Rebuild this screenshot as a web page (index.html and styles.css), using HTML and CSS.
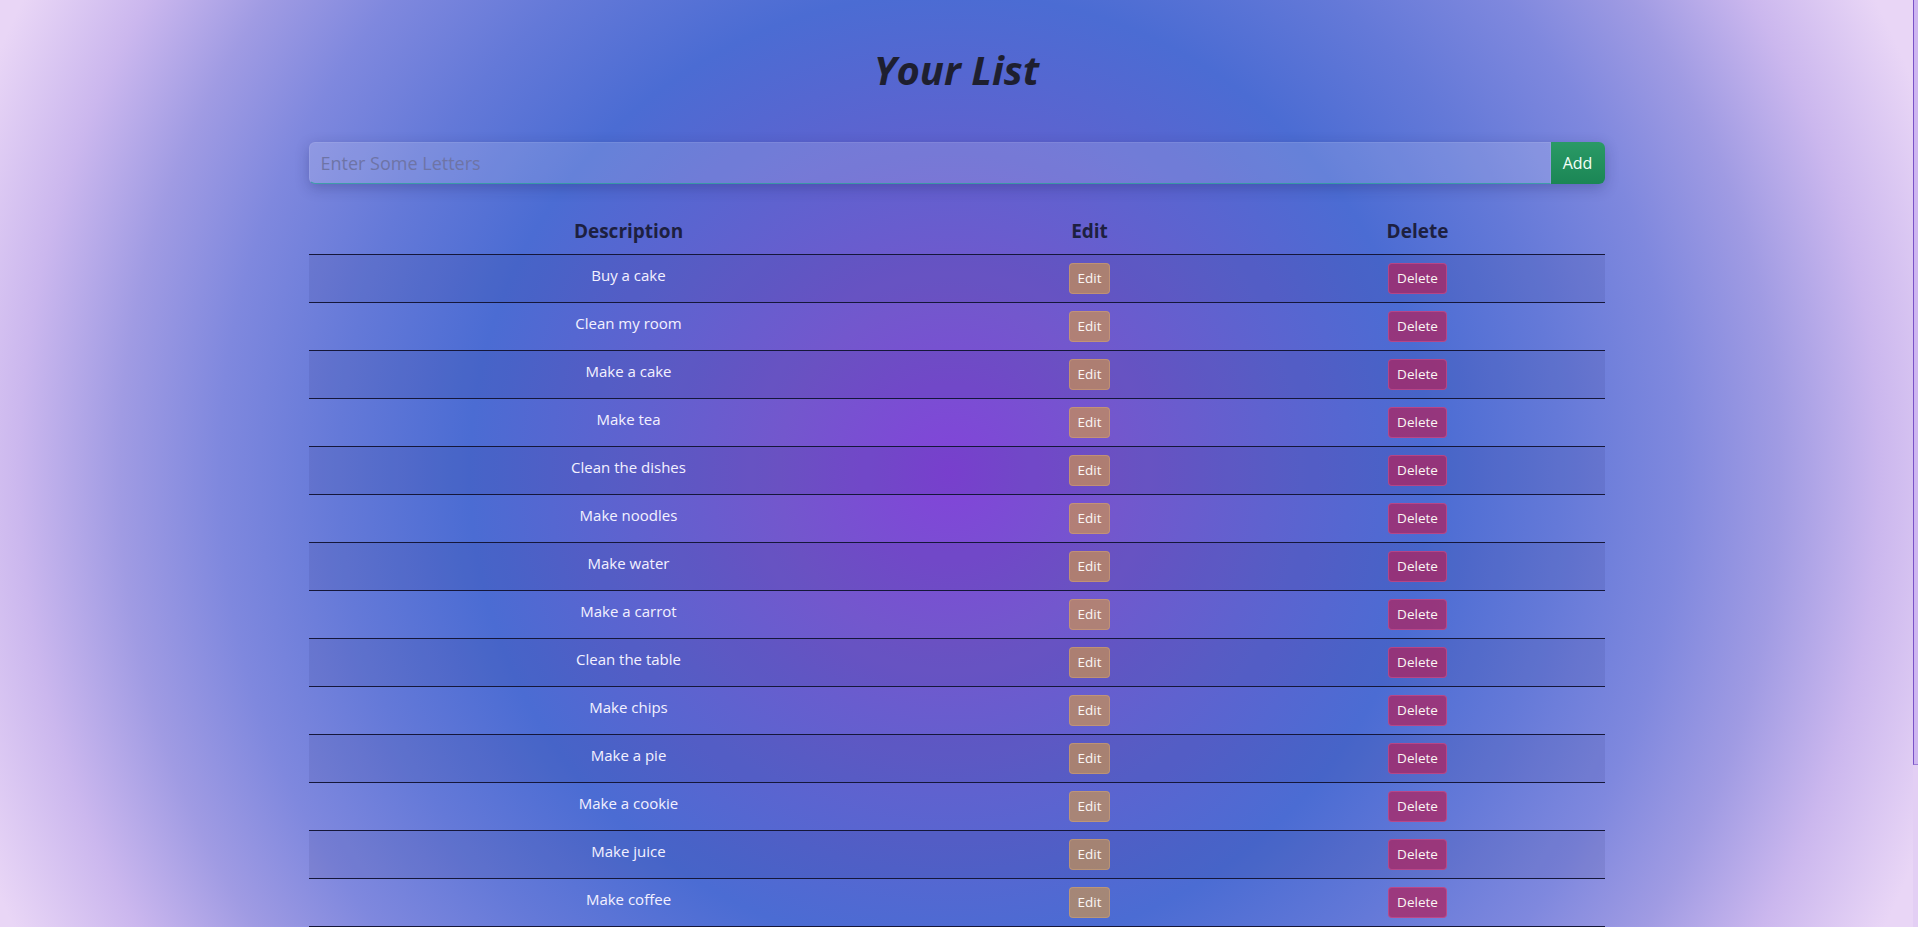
FILE: index.html
```html
<!DOCTYPE html>
<html lang="en">
<head>
<meta charset="utf-8">
<title>Your List</title>
<link rel="stylesheet" href="styles.css">
</head>
<body>
<main class="container">
  <h1 class="title">Your List</h1>
  <form class="add-form">
    <input class="add-input" type="text" placeholder="Enter Some Letters">
    <button class="add-btn" type="button">Add</button>
  </form>
  <table class="todo-table">
    <colgroup>
      <col class="col-desc">
      <col class="col-edit">
      <col class="col-del">
    </colgroup>
    <thead>
      <tr><th>Description</th><th>Edit</th><th>Delete</th></tr>
    </thead>
    <tbody>
      <tr><td>Buy a cake</td><td><button class="btn btn-edit">Edit</button></td><td><button class="btn btn-del">Delete</button></td></tr>
      <tr><td>Clean my room</td><td><button class="btn btn-edit">Edit</button></td><td><button class="btn btn-del">Delete</button></td></tr>
      <tr><td>Make a cake</td><td><button class="btn btn-edit">Edit</button></td><td><button class="btn btn-del">Delete</button></td></tr>
      <tr><td>Make tea</td><td><button class="btn btn-edit">Edit</button></td><td><button class="btn btn-del">Delete</button></td></tr>
      <tr><td>Clean the dishes</td><td><button class="btn btn-edit">Edit</button></td><td><button class="btn btn-del">Delete</button></td></tr>
      <tr><td>Make noodles</td><td><button class="btn btn-edit">Edit</button></td><td><button class="btn btn-del">Delete</button></td></tr>
      <tr><td>Make water</td><td><button class="btn btn-edit">Edit</button></td><td><button class="btn btn-del">Delete</button></td></tr>
      <tr><td>Make a carrot</td><td><button class="btn btn-edit">Edit</button></td><td><button class="btn btn-del">Delete</button></td></tr>
      <tr><td>Clean the table</td><td><button class="btn btn-edit">Edit</button></td><td><button class="btn btn-del">Delete</button></td></tr>
      <tr><td>Make chips</td><td><button class="btn btn-edit">Edit</button></td><td><button class="btn btn-del">Delete</button></td></tr>
      <tr><td>Make a pie</td><td><button class="btn btn-edit">Edit</button></td><td><button class="btn btn-del">Delete</button></td></tr>
      <tr><td>Make a cookie</td><td><button class="btn btn-edit">Edit</button></td><td><button class="btn btn-del">Delete</button></td></tr>
      <tr><td>Make juice</td><td><button class="btn btn-edit">Edit</button></td><td><button class="btn btn-del">Delete</button></td></tr>
      <tr><td>Make coffee</td><td><button class="btn btn-edit">Edit</button></td><td><button class="btn btn-del">Delete</button></td></tr>
    </tbody>
  </table>
</main>
<div class="scrollbar" aria-hidden="true"><div class="scrollbar-thumb"></div></div>
</body>
</html>
```

FILE: styles.css
```css
html {
  background: #e8d4f5;
}
body {
  margin: 0;
  padding-right: 5px;
  min-height: 100vh;
  font-family: "Open Sans", "Noto Sans", sans-serif;
  font-size: 16px;
  line-height: 1.5;
  color: #f3f1ff;
  background: radial-gradient(circle at 49.5% 51%,
    #8244d9 0px,
    #7357cd 170px,
    #5f62cf 320px,
    #4b6cd3 480px,
    #6479d8 610px,
    #7f88de 730px,
    #a09be3 830px,
    #cbb7ee 930px,
    #e9d6f6 1040px) fixed;
}
.container {
  width: 1296px;
  margin: 0 auto;
}
.title {
  margin: 46px 0 48px;
  text-align: center;
  font-size: 40px;
  line-height: 48px;
  font-weight: 700;
  font-style: italic;
  color: #1e1f30;
}
.add-form {
  display: flex;
  height: 42px;
  margin: 0 0 24px;
  box-shadow: 0 4px 14px rgba(30, 30, 90, 0.28);
  border-radius: 6px;
}
.add-input {
  flex: 1;
  min-width: 0;
  margin: 0;
  padding: 0 11px;
  font-family: inherit;
  font-size: 18px;
  color: #2a2d50;
  background: rgba(255, 255, 255, 0.15);
  border: 1px solid rgba(255, 255, 255, 0.08);
  border-bottom: 1px solid rgba(40, 160, 150, 0.75);
  border-radius: 6px 0 0 6px;
  outline: none;
}
.add-input::placeholder {
  color: #6e74a6;
}
.add-btn {
  width: 54px;
  margin: 0;
  padding: 0;
  font-family: inherit;
  font-size: 16px;
  color: #f4fff8;
  background: linear-gradient(#2a9a66, #1b8655);
  border: 0;
  border-radius: 0 6px 6px 0;
}
.todo-table {
  width: 100%;
  table-layout: fixed;
  border-collapse: collapse;
}
.col-desc { width: 640px; }
.col-edit { width: 282px; }
.col-del { width: 374px; }
.todo-table th {
  padding: 8px;
  font-size: 19px;
  line-height: 30px;
  font-weight: 700;
  color: #1d2040;
  text-align: center;
  border-bottom: 1px solid #15173a;
}
.todo-table td {
  padding: 8px;
  vertical-align: top;
  text-align: center;
  font-size: 15px;
  line-height: 24px;
  border-bottom: 1px solid #15173a;
}
.todo-table tbody tr:nth-child(odd) td {
  background: rgba(25, 25, 90, 0.09);
}
.btn {
  height: 31px;
  margin: 0;
  padding: 0 8px;
  font-family: inherit;
  font-size: 13.5px;
  line-height: 29px;
  color: #fbf6f4;
  border-radius: 4px;
  cursor: pointer;
}
.btn-edit {
  background: rgba(210, 150, 70, 0.65);
  border: 1px solid rgba(230, 180, 120, 0.35);
}
.btn-del {
  background: rgba(175, 35, 95, 0.74);
  border: 1px solid rgba(225, 90, 150, 0.45);
}
.scrollbar {
  position: fixed;
  top: 0;
  right: 0;
  bottom: 0;
  width: 5px;
  background: #e3cff4;
}
.scrollbar-thumb {
  height: 765px;
  box-sizing: border-box;
  background: #cdb5f0;
  border-left: 1px solid #7a52c8;
  border-bottom: 1px solid #9a7ad6;
}
```
